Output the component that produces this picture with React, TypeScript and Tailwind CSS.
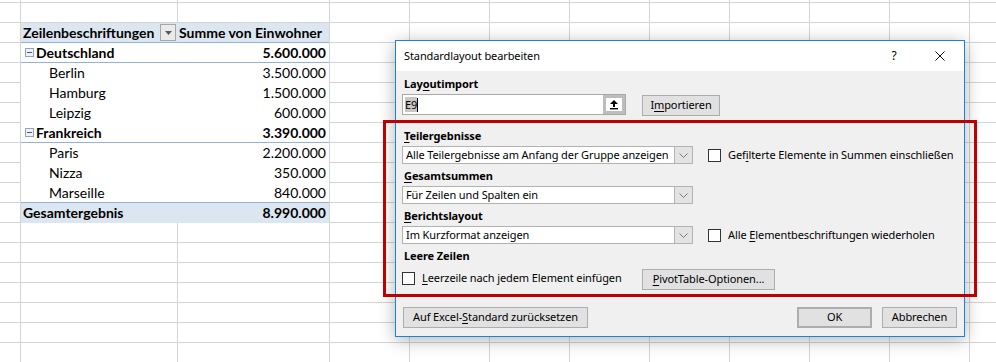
import type { ReactNode } from 'react';

const rest = Array.from({ length: 9 });

function GridTail() {
  return (
    <>
      {rest.map((_, i) => (
        <div key={i} className="w-[80px] shrink-0 border-r border-b border-[#d4d4d4]" />
      ))}
    </>
  );
}

function EmptyRow({ h = 'h-[20px]' }: { h?: string }) {
  return (
    <div className={`flex ${h}`}>
      <div className="w-[21px] shrink-0 border-r border-b border-[#d4d4d4]" />
      <div className="w-[157px] shrink-0 border-r border-b border-[#d4d4d4]" />
      <div className="w-[152px] shrink-0 border-r border-b border-[#d4d4d4]" />
      <GridTail />
    </div>
  );
}

interface PivotRowProps {
  label: ReactNode;
  value?: ReactNode;
  line?: 'blue' | 'none' | 'fill';
  fill?: boolean;
  bold?: boolean;
}

function PivotRow({ label, value, line = 'none', fill, bold }: PivotRowProps) {
  const lineCls =
    line === 'blue' ? 'border-[#95b3d7]' : line === 'fill' ? 'border-[#dce6f1]' : 'border-white';
  return (
    <div className="flex h-[20px]">
      <div className="w-[21px] shrink-0 border-r border-b border-[#d4d4d4]" />
      <div
        className={`w-[308px] shrink-0 flex border-b ${lineCls} ${fill ? 'bg-[#dce6f1]' : 'bg-white'} ${bold ? 'font-bold' : ''}`}
      >
        <div className="w-[156px] shrink-0 flex items-center leading-[19px]">{label}</div>
        <div className="flex-1 flex items-center justify-end pr-[3px] leading-[19px]">{value}</div>
      </div>
      <div className="w-[1px] shrink-0 h-[20px] bg-[#d4d4d4]" />
      <GridTail />
    </div>
  );
}

function Collapse() {
  return (
    <span className="w-[9px] h-[9px] ml-[4px] mr-[2px] border border-[#8ea4c0] bg-[#eef2f8] flex items-center justify-center">
      <span className="w-[5px] h-[1px] bg-[#505a68]" />
    </span>
  );
}

function Sheet() {
  return (
    <div className="flex flex-col text-[14px] text-black font-['Lato',sans-serif]">
      <EmptyRow h="h-[3px]" />
      <EmptyRow />
      {/* header row */}
      <div className="flex h-[20px]">
        <div className="w-[21px] shrink-0 border-r border-b border-[#d4d4d4]" />
        <div className="w-[308px] shrink-0 flex border-b border-[#95b3d7] bg-[#dce6f1] font-bold">
          <div className="w-[156px] shrink-0 flex items-center leading-[19px] pl-[2px]">
            <span className="flex-1">Zeilenbeschriftungen</span>
            <span className="w-[16px] h-[17px] border border-[#a6a6a6] bg-[#eaeaea] flex items-center justify-center mr-[1px]">
              <svg width="7" height="4" viewBox="0 0 7 4">
                <path d="M0 0 L7 0 L3.5 4 Z" fill="#595959" />
              </svg>
            </span>
          </div>
          <div className="flex-1 flex items-center leading-[19px] pl-[2px]">Summe von Einwohner</div>
        </div>
        <div className="w-[1px] shrink-0 h-[20px] bg-[#d4d4d4]" />
        <GridTail />
      </div>
      <PivotRow
        bold
        line="blue"
        label={
          <>
            <Collapse />
            <span>Deutschland</span>
          </>
        }
        value="5.600.000"
      />
      <PivotRow label={<span className="pl-[28px]">Berlin</span>} value="3.500.000" />
      <PivotRow label={<span className="pl-[28px]">Hamburg</span>} value="1.500.000" />
      <PivotRow label={<span className="pl-[28px]">Leipzig</span>} value="600.000" />
      <PivotRow
        bold
        line="blue"
        label={
          <>
            <Collapse />
            <span>Frankreich</span>
          </>
        }
        value="3.390.000"
      />
      <PivotRow label={<span className="pl-[28px]">Paris</span>} value="2.200.000" />
      <PivotRow label={<span className="pl-[28px]">Nizza</span>} value="350.000" />
      <PivotRow line="blue" label={<span className="pl-[28px]">Marseille</span>} value="840.000" />
      <PivotRow
        bold
        fill
        line="fill"
        label={<span className="pl-[2px]">Gesamtergebnis</span>}
        value="8.990.000"
      />
      <EmptyRow />
      <EmptyRow />
      <EmptyRow />
      <EmptyRow />
      <EmptyRow />
      <EmptyRow />
      <EmptyRow />
    </div>
  );
}

function Btn({ children, className = '' }: { children: ReactNode; className?: string }) {
  return (
    <div
      className={`h-[21px] flex items-center justify-center bg-[#e1e1e1] border border-[#adadad] ${className}`}
    >
      {children}
    </div>
  );
}

function Select({ text }: { text: string }) {
  return (
    <div className="w-[291px] h-[18px] flex border border-[#b2b2b2] bg-white">
      <div className="flex-1 pl-[3px] flex items-center leading-[16px] whitespace-nowrap overflow-hidden">
        {text}
      </div>
      <div className="w-[18px] shrink-0 bg-[#e3e3e3] border-l border-[#b2b2b2] flex items-center justify-center">
        <svg width="9" height="5" viewBox="0 0 9 5">
          <path d="M0.5 0.5 L4.5 4.5 L8.5 0.5" fill="none" stroke="#7a7a7a" strokeWidth="1" />
        </svg>
      </div>
    </div>
  );
}

function Check({ children }: { children: ReactNode }) {
  return (
    <div className="flex items-center">
      <span className="w-[13px] h-[13px] border border-[#333333] bg-white shrink-0" />
      <span className="ml-[7px] leading-[16px]">{children}</span>
    </div>
  );
}

function Label({ children }: { children: ReactNode }) {
  return <div className="pl-[2px] h-[16px] leading-[16px] font-bold">{children}</div>;
}

function Dialog() {
  return (
    <div className="absolute left-[395px] top-[40px] w-[570px] h-[297px] flex flex-col border border-[#1883d7] bg-[#f0f0f0] shadow-[0_3px_16px_rgba(0,0,0,0.3)] text-[11px] tracking-[-0.1px] text-black font-['Noto_Sans',sans-serif]">
      <div className="h-[30px] bg-white flex items-center shrink-0">
        <span className="flex-1 pl-[8px]">Standardlayout bearbeiten</span>
        <span className="w-[46px] text-center text-[12px]">?</span>
        <span className="w-[46px] flex items-center justify-center mr-[1px]">
          <svg width="10" height="10" viewBox="0 0 10 10">
            <path d="M0.5 0.5 L9.5 9.5 M9.5 0.5 L0.5 9.5" stroke="#111" strokeWidth="1" />
          </svg>
        </span>
      </div>

      <div className="flex flex-col pl-[6px]">
        <div className="mt-[5px]">
          <Label>
            Lay<u className="underline-offset-2">o</u>utimport
          </Label>
        </div>
        <div className="mt-[2px] flex items-start">
          <div className="w-[224px] h-[21px] flex border border-[#a9a9a9] bg-white">
            <div className="flex-1 flex items-center pl-[2px]">
              <span className="bg-[#c7c7c7] leading-[15px]">E9</span>
              <span className="w-[1px] h-[14px] bg-black" />
            </div>
            <div className="w-[22px] border-[3px] border-[#bdbdbd] bg-white flex items-center justify-center">
              <svg width="10" height="11" viewBox="0 0 10 11">
                <path d="M1 5 L5 1 L9 5 Z" fill="#000" />
                <rect x="4" y="5" width="2" height="3" fill="#000" />
                <rect x="1" y="9" width="8" height="1.4" fill="#000" />
              </svg>
            </div>
          </div>
          <Btn className="ml-[16px] mt-[1px] w-[78px]">
            <span>
              I<u className="underline-offset-2">m</u>portieren
            </span>
          </Btn>
        </div>

        <div className="mt-[12px]">
          <Label>
            <u className="underline-offset-2">T</u>eilergebnisse
          </Label>
        </div>
        <div className="mt-[2px] flex items-center">
          <Select text="Alle Teilergebnisse am Anfang der Gruppe anzeigen" />
          <div className="ml-[15px]">
            <Check>
              Gef<u className="underline-offset-2">i</u>lterte Elemente in Summen einschließen
            </Check>
          </div>
        </div>

        <div className="mt-[4px]">
          <Label>
            <u className="underline-offset-2">G</u>esamtsummen
          </Label>
        </div>
        <div className="mt-[2px] flex items-center">
          <Select text="Für Zeilen und Spalten ein" />
        </div>

        <div className="mt-[4px]">
          <Label>
            <u className="underline-offset-2">B</u>erichtslayout
          </Label>
        </div>
        <div className="mt-[2px] flex items-center">
          <Select text="Im Kurzformat anzeigen" />
          <div className="ml-[15px]">
            <Check>
              Alle <u className="underline-offset-2">E</u>lementbeschriftungen wiederholen
            </Check>
          </div>
        </div>

        <div className="mt-[4px]">
          <Label>Leere Zeilen</Label>
        </div>
        <div className="mt-[5px] flex items-start">
          <div className="w-[240px] mt-[1px]">
            <Check>
              <u className="underline-offset-2">L</u>eerzeile nach jedem Element einfügen
            </Check>
          </div>
          <Btn className="w-[133px]">
            <span>
              <u className="underline-offset-2">P</u>ivotTable-Optionen...
            </span>
          </Btn>
        </div>

        <div className="mt-[17px] flex items-start">
          <Btn className="ml-[1px] w-[185px]">
            <span>
              Auf Excel-<u className="underline-offset-2">S</u>tandard zurücksetzen
            </span>
          </Btn>
          <div className="flex-1" />
          <Btn className="w-[75px] border-2 border-[#0078d7]">OK</Btn>
          <Btn className="ml-[10px] mr-[7px] w-[75px]">Abbrechen</Btn>
        </div>
      </div>
    </div>
  );
}

export default function App() {
  return (
    <div className="relative w-[996px] h-[362px] overflow-hidden bg-white">
      <Sheet />
      <Dialog />
      {/* red highlight frame */}
      <div className="absolute left-[383px] top-[120px] w-[594px] h-[177px] border-[3px] border-[#c00000] pointer-events-none" />
    </div>
  );
}
